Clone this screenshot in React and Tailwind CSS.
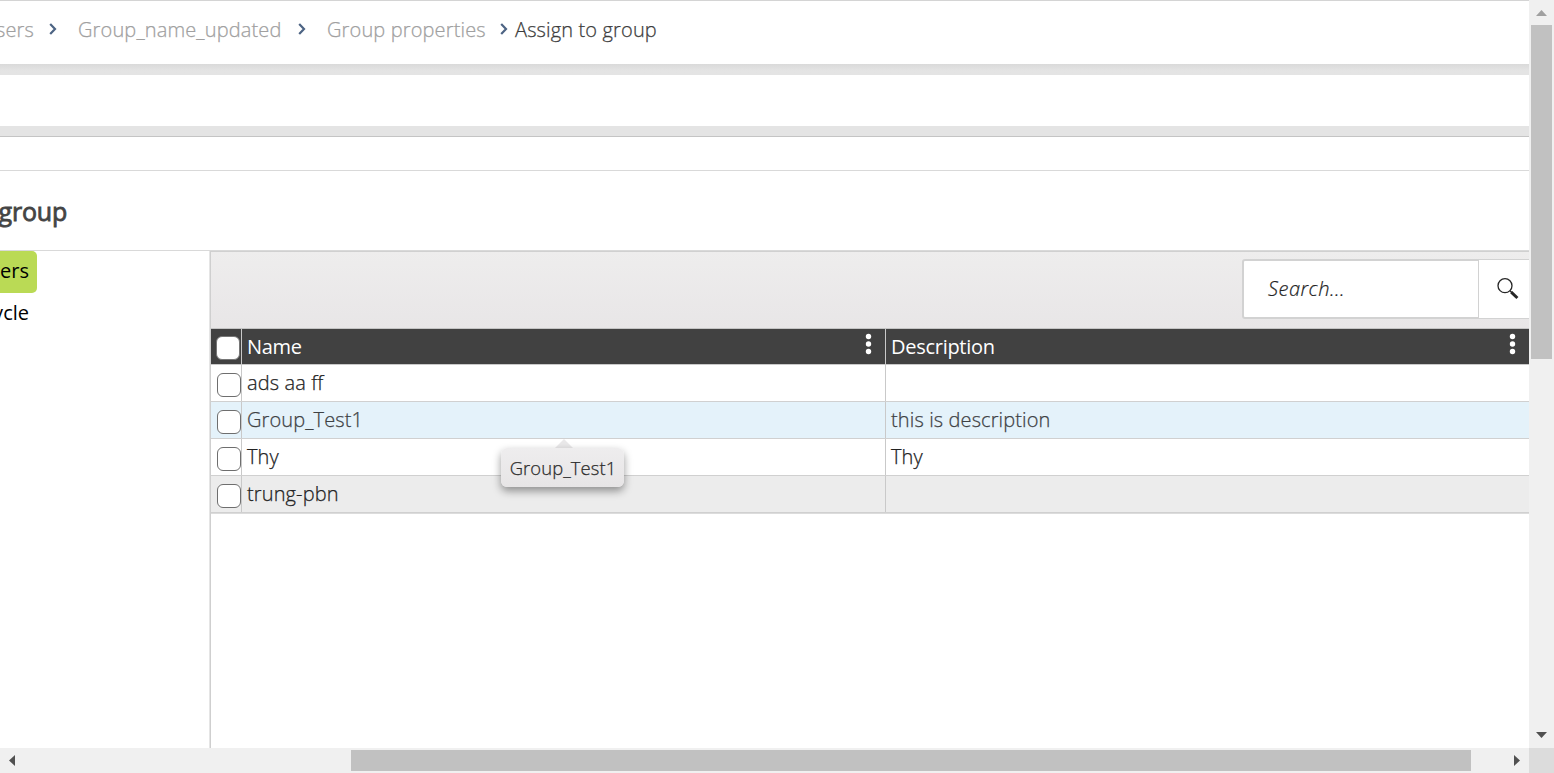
import React from 'react';

const rows = [
  { name: 'ads aa ff', description: '', tone: 'bg-white text-[#222]' },
  { name: 'Group_Test1', description: 'this is description', tone: 'bg-[#e4f2fa] text-[#3d4144]' },
  { name: 'Thy', description: 'Thy', tone: 'bg-white text-[#222]' },
  { name: 'trung-pbn', description: '', tone: 'bg-[#ececec] text-[#222]' },
];

function Chevron({ className }) {
  return (
    <svg className={`h-3 w-2 shrink-0 ${className}`} viewBox="0 0 8 12" fill="none" stroke="#4d6484" strokeWidth="2.2">
      <path d="M1.2 1 6 6 1.2 11" />
    </svg>
  );
}

function Dots({ className }) {
  return (
    <svg className={`h-5 w-[5px] shrink-0 overflow-visible ${className}`} viewBox="0 0 5 20" fill="#fff">
      <circle cx="2.5" cy="2.5" r="2.7" />
      <circle cx="2.5" cy="10" r="2.7" />
      <circle cx="2.5" cy="17.5" r="2.7" />
    </svg>
  );
}

function Breadcrumb() {
  return (
    <nav className="flex h-16 shrink-0 items-start border-t border-[#d4d4d4] bg-white pt-[14px] text-[20px] leading-[30px] font-light tracking-[0.14px] text-[#a0a0a0] [-webkit-text-stroke:0.25px]">
      <div className="flex w-[34px] shrink-0 justify-end whitespace-nowrap"><span>Users</span></div>
      <Chevron className="mt-2 ml-[15px]" />
      <span className="ml-[21px] w-[204px] whitespace-nowrap">Group_name_updated</span>
      <Chevron className="mt-2 ml-4" />
      <span className="ml-[21px] w-[158px] whitespace-nowrap">Group properties</span>
      <Chevron className="mt-2 ml-[15px]" />
      <span className="ml-[7px] whitespace-nowrap text-[#3c3c3c]">Assign to group</span>
    </nav>
  );
}

function Sidebar() {
  return (
    <aside className="w-[209px] shrink-0 text-[20px] leading-[30px] text-black">
      <div className="flex h-[42px] w-[37px] justify-end rounded-r-[5px] bg-[#bada55] pt-[5px] pr-2">
        <span>Users</span>
      </div>
      <div className="flex h-[42px] w-[37px] justify-end pt-[5px] pr-2">
        <span className="whitespace-nowrap">Lifecycle</span>
      </div>
    </aside>
  );
}

function Toolbar() {
  return (
    <div className="flex h-[78px] shrink-0 items-start justify-end border-t border-b border-t-[#d0d0d0] border-b-[#c4c4c4] bg-linear-to-b from-[#eeeded] to-[#e8e6e7] pt-[7px]">
      <div className="flex h-[60px] w-[237px] items-center rounded-l-[3px] border-2 border-r border-[#d2d2d2] bg-white pl-[24px] text-[20px] font-light tracking-[0.5px] text-[#222] italic [-webkit-text-stroke:0.2px]">
        <span className="pb-px">Search...</span>
      </div>
      <div className="flex h-[60px] w-[50px] border-t border-b border-[#d2d2d2] bg-white pt-[18px] pl-[18px]">
        <svg className="h-[22px] w-[23px]" viewBox="0 0 23 22" fill="none" stroke="#262626">
          <circle cx="8" cy="7.7" r="7" strokeWidth="1.3" />
          <path d="m13 12.700 2 2" strokeWidth="1.5" />
          <path d="m14.2 14.2 6.2 5.8" strokeWidth="3" />
        </svg>
      </div>
    </div>
  );
}

function Tooltip() {
  return (
    <div className="absolute top-[110px] left-[290px] z-20 flex flex-col items-center">
      <svg className="ml-[3px] h-[9px] w-[18px]" viewBox="0 0 18 9"><path d="M0 9 9 0l9 9z" fill="#e9e8e9" /></svg>
      <div className="flex h-[39px] w-[123px] justify-center rounded-[6px] bg-linear-to-b from-[#eeedee] to-[#e7e5e6] pl-px text-[18.4px] leading-[40px] font-light tracking-[0.1px] text-[#2c2c2c] shadow-[0_4px_8px_rgba(0,0,0,0.4)] [-webkit-text-stroke:0.25px]">
        <span className="whitespace-nowrap">Group_Test1</span>
      </div>
    </div>
  );
}

function Grid() {
  return (
    <div className="relative text-[20px] leading-[30px]">
      <div className="flex h-9 border-b border-[#c9c9c9] bg-[#414141] tracking-[-0.28px] text-white">
        <div className="w-[31px] shrink-0 border-r border-[#c9c9c9] pt-[7px] pl-[5px]">
          <div className="h-6 w-6 rounded-[6px] border border-[#767676] bg-white" />
        </div>
        <div className="flex w-[644px] shrink-0 justify-between border-r border-[#c9c9c9] pt-[3px] pl-[5px]">
          <span>Name</span>
          <Dots className="mt-[2px] mr-[14px]" />
        </div>
        <div className="flex flex-1 justify-between pt-[3px] pl-[5px]">
          <span>Description</span>
          <Dots className="mt-[2px] mr-[14px]" />
        </div>
      </div>
      {rows.map((row) => (
        <div key={row.name} className={`flex h-[37px] border-b border-[#d0d0d0] font-light tracking-[0.12px] [-webkit-text-stroke:0.25px] ${row.tone}`}>
          <div className="w-[31px] shrink-0 border-r border-[#c9c9c9] pt-2 pl-[6px]">
            <div className="relative h-6 w-6 rounded-[6px] border border-[#6e6e6e] bg-white" />
          </div>
          <div className="w-[644px] shrink-0 border-r border-[#c9c9c9] pt-[3px] pl-[5px]">{row.name}</div>
          <div className="flex-1 pt-[3px] pl-[5px]">{row.description}</div>
        </div>
      ))}
      <div className="h-px bg-[#dcdcdc]" />
      <Tooltip />
    </div>
  );
}

function VerticalScrollbar() {
  return (
    <div className="flex w-[25px] shrink-0 flex-col items-center bg-[#f0f0f0]">
      <svg className="mt-[10px] h-[6px] w-[11px]" viewBox="0 0 11 6"><path d="M0 6 5.5 0 11 6z" fill="#a0a0a0" /></svg>
      <div className="mt-[9px] h-[334px] w-[21px] bg-[#c1c1c1]" />
      <svg className="mt-auto mb-[10px] h-[6px] w-[11px]" viewBox="0 0 11 6"><path d="M0 0h11L5.500 6z" fill="#505050" /></svg>
    </div>
  );
}

function HorizontalScrollbar() {
  return (
    <div className="flex h-[25px] shrink-0 bg-[#f0f0f0]">
      <div className="flex flex-1 items-center">
        <svg className="ml-[9px] h-[11px] w-[6px]" viewBox="0 0 6 11"><path d="M6 0v11L0 5.500z" fill="#505050" /></svg>
        <div className="ml-[336px] h-[21px] w-[1120px] bg-[#c1c1c1]" />
        <svg className="mr-[9px] ml-auto h-[11px] w-[6px]" viewBox="0 0 6 11"><path d="M0 0v11l6-5.500z" fill="#505050" /></svg>
      </div>
      <div className="w-[25px] bg-[#dcdcdc]" />
    </div>
  );
}

export default function App() {
  return (
    <div className="flex h-[773px] w-[1554px] flex-col overflow-hidden bg-white font-['Open_Sans',sans-serif]">
      <div className="flex h-[748px]">
        <main className="flex w-[1529px] flex-col overflow-hidden">
          <Breadcrumb />
          <div className="h-[11px] shrink-0 bg-linear-to-b from-[#dadada] to-[#e4e4e4] to-60%" />
          <div className="h-[51px] shrink-0 bg-white" />
          <div className="h-[11px] shrink-0 border-b border-[#c4c4c4] bg-[#e4e4e4]" />
          <div className="h-[34px] shrink-0 border-b border-[#d9d9d9]" />
          <div className="flex h-20 shrink-0 border-b border-[#d9d9d9] pt-[22px]">
            <h1 className="flex w-[67px] justify-end text-[25px] leading-[36px] font-normal tracking-[-0.2px] whitespace-nowrap text-[#444] [-webkit-text-stroke:0.8px]"><span>Assign to group</span></h1>
          </div>
          <div className="flex flex-1">
            <Sidebar />
            <section className="flex flex-1 flex-col border-l border-[#e5e5e5]">
              <div className="flex flex-1 flex-col border-l border-[#cfcfcf]">
                <Toolbar />
                <Grid />
              </div>
            </section>
          </div>
        </main>
        <VerticalScrollbar />
      </div>
      <HorizontalScrollbar />
    </div>
  );
}
